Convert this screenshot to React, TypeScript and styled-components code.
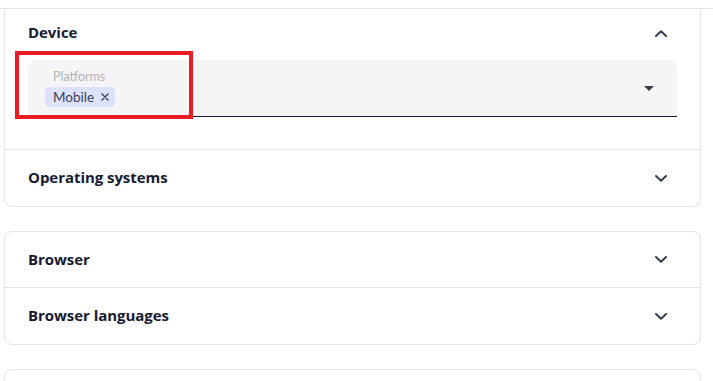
import React from 'react'
import styled, { createGlobalStyle } from 'styled-components'

const GlobalStyle = createGlobalStyle`
  body {
    margin: 0;
    background: #fff;
    font-family: Lato, "Liberation Sans", sans-serif;
    color: #161b33;
  }
`

const Chevron = ({ up }: { up?: boolean }) => (
  <svg width="12" height="7" viewBox="0 0 12 7" fill="none">
    <polyline
      points={up ? '1,6 6,1.3 11,6' : '1,1 6,5.7 11,1'}
      stroke="#363d52"
      strokeWidth="2"
      strokeLinecap="round"
      strokeLinejoin="round"
    />
  </svg>
)

const Caret = () => (
  <svg width="10" height="5" viewBox="0 0 10 5">
    <polygon points="0,0 10,0 5,5" fill="#363d52" />
  </svg>
)

const CloseX = () => (
  <svg width="8" height="8" viewBox="0 0 8 8" fill="none">
    <path d="M1 1 L7 7 M7 1 L1 7" stroke="#3b3f52" strokeWidth="1.4" strokeLinecap="round" />
  </svg>
)

const App = () => {
  return (
    <Page>
      <GlobalStyle />
      <TopBar />
      <Card $flatTop>
        <Section>
          <SectionHeader $h={48}>
            <Title>Device</Title>
            <Chevron up />
          </SectionHeader>
          <SectionBody>
            <SelectField>
              <FieldMain>
                <FieldLabel>Platforms</FieldLabel>
                <Chip>
                  Mobile
                  <CloseX />
                </Chip>
              </FieldMain>
              <Caret />
            </SelectField>
          </SectionBody>
        </Section>
        <Section>
          <SectionHeader $h={56}>
            <Title>Operating systems</Title>
            <Chevron />
          </SectionHeader>
        </Section>
      </Card>
      <Card>
        <Section>
          <SectionHeader $h={55}>
            <Title>Browser</Title>
            <Chevron />
          </SectionHeader>
        </Section>
        <Section>
          <SectionHeader $h={56}>
            <Title>Browser languages</Title>
            <Chevron />
          </SectionHeader>
        </Section>
      </Card>
      <Card>
        <SectionHeader $h={56} />
      </Card>
      <Highlight />
    </Page>
  )
}

const Page = styled.div`
  position: relative;
  width: 713px;
  height: 381px;
  overflow: hidden;
`

const TopBar = styled.div`
  height: 8px;
  border-bottom: 1px solid #e4e4e4;
`

const Card = styled.div<{ $flatTop?: boolean }>`
  margin: 24px 12px 0 4px;
  border: 1px solid #e4e4e4;
  border-radius: 8px;
  background: #fff;
  ${({ $flatTop }) =>
    $flatTop &&
    `
    margin-top: 0;
    border-top: none;
    border-radius: 0 0 8px 8px;
  `}
`

const Section = styled.div`
  & + & {
    border-top: 1px solid #e4e4e4;
  }
`

const SectionHeader = styled.div<{ $h: number }>`
  display: flex;
  align-items: center;
  justify-content: space-between;
  height: ${({ $h }) => $h}px;
  padding: 0 33px 0 23px;
`

const Title = styled.span`
  font-family: "Open Sans", Lato, sans-serif;
  font-size: 15px;
  font-weight: 700;
  letter-spacing: -0.05px;
  color: #161b33;
  margin-top: -2px;
`

const SectionBody = styled.div`
  padding: 3px 23px 32px 23px;
`

const SelectField = styled.div`
  display: flex;
  align-items: center;
  justify-content: space-between;
  height: 56px;
  box-sizing: content-box;
  padding: 0 23px 0 17px;
  background: #f5f5f5;
  border-radius: 8px 8px 0 0;
  border-bottom: 1px solid #1a1b33;
`

const FieldMain = styled.div`
  display: flex;
  flex-direction: column;
  align-items: flex-start;
`

const FieldLabel = styled.span`
  font-size: 12.5px;
  line-height: 16px;
  color: #b3b3b8;
  padding-left: 8px;
  margin-bottom: 2px;
`

const Chip = styled.span`
  display: inline-flex;
  align-items: center;
  gap: 7px;
  height: 20px;
  padding: 0 6px 0 8px;
  border-radius: 4px;
  background: #dce2fc;
  font-size: 13.5px;
  color: #3a3e52;
`

const Highlight = styled.div`
  position: absolute;
  left: 15px;
  top: 51px;
  width: 178px;
  height: 68px;
  box-sizing: border-box;
  border: 4px solid #ec1c24;
  pointer-events: none;
`

export default App
